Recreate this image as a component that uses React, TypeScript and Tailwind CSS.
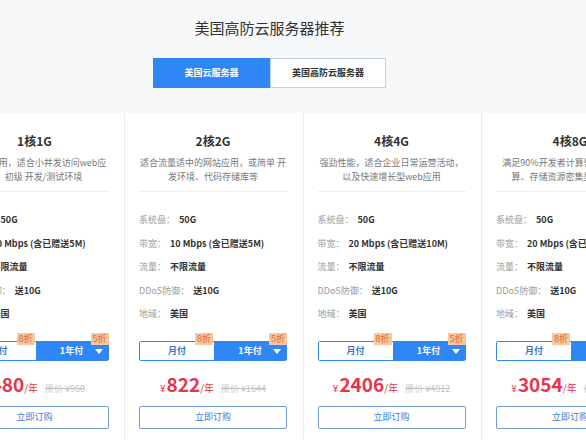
import React from "react";

type Card = {
  title: string;
  desc: string[];
  bw: string;
  price: string;
  orig: string;
};

const cards: Card[] = [
  {
    title: "1核1G",
    desc: ["入门级使用，适合小并发访问web应", "用，初级 开发/测试环境"],
    bw: "10 Mbps (含已赠送5M)",
    price: "480",
    orig: "960",
  },
  {
    title: "2核2G",
    desc: ["适合流量适中的网站应用，或简单 开", "发环境、代码存储库等"],
    bw: "10 Mbps (含已赠送5M)",
    price: "822",
    orig: "1644",
  },
  {
    title: "4核4G",
    desc: ["强劲性能，适合企业日常运营活动，", "以及快速增长型web应用"],
    bw: "20 Mbps (含已赠送10M)",
    price: "2406",
    orig: "4812",
  },
  {
    title: "4核8G",
    desc: ["满足90%开发者计算需求，适合计", "算、存储资源密集型业务应用"],
    bw: "20 Mbps (含已赠送10M)",
    price: "3054",
    orig: "6108",
  },
];

function Spec({ label, value }: { label: string; value: string }) {
  return (
    <div className="flex items-center h-[23.5px] whitespace-nowrap">
      <span className="text-[#9a9a9a]">{label}：</span>
      <span className="ml-[4px] font-bold text-[#333]">{value}</span>
    </div>
  );
}

function PlanCard({ c }: { c: Card }) {
  return (
    <div className="w-[178.5px] shrink-0 bg-white border-l border-[#ececec] pl-[14px] pr-[15.5px] pt-[20px] pb-[30px]">
      <div className="text-center text-[12px] leading-[16px] font-bold text-[#333]">{c.title}</div>
      <div className="mt-[7px] text-[9px] leading-[14px] text-[#777] flex flex-col items-center">
        {c.desc.map((d, i) => (
          <div key={i} className="whitespace-nowrap">{d}</div>
        ))}
      </div>
      <div className="mt-[7px] h-px bg-[#eeeeee]" />
      <div className="mt-[16px] text-[9px]">
        <Spec label="系统盘" value="50G" />
        <Spec label="带宽" value={c.bw} />
        <Spec label="流量" value="不限流量" />
        <Spec label="DDoS防御" value="送10G" />
        <Spec label="地域" value="美国" />
      </div>
      <div className="relative mt-[15px] h-[20px] flex border border-[#2f86f5] rounded-[2px] text-[9px]">
        <div className="w-[74px] flex items-center justify-center bg-white text-[#3a74c8] font-bold">月付</div>
        <div className="flex-1 relative flex items-center justify-center bg-[#2f86f5] text-white font-bold">
          1年付
          <svg className="absolute right-[5px] top-[7px]" width="8" height="5" viewBox="0 0 8 5">
            <path d="M0 0 L8 0 L4 5 Z" fill="#ffffff" />
          </svg>
        </div>
        <span className="absolute left-[55px] -top-[9px] h-[12px] px-[2px] bg-[#f8c79f] text-[#e5652a] text-[9px] leading-[12px]">8折</span>
        <span className="absolute -right-px -top-[9px] h-[12px] px-[2px] bg-[#f8c79f] text-[#e5652a] text-[9px] leading-[12px]">5折</span>
      </div>
      <div className="mt-[11px] flex items-baseline justify-center whitespace-nowrap text-[#e8344c]">
        <span className="text-[10px]">¥</span>
        <span className="ml-[1px] text-[19px] leading-[24px] font-bold">{c.price}</span>
        <span className="text-[10px]">/年</span>
        <span className="ml-[7px] text-[9px] text-[#c4c4c4] line-through">原价 ¥{c.orig}</span>
      </div>
      <div className="mt-[10px] h-[23px] flex items-center justify-center border border-[#6f9cdb] rounded-[2px] text-[9px] text-[#3a7bd6]">
        立即订购
      </div>
    </div>
  );
}

export default function App() {
  return (
    <div
      className="w-[586px] h-[440px] overflow-hidden bg-[#f7f8fa]"
      style={{ fontFamily: '"Noto Sans CJK SC", "Noto Sans", sans-serif' }}
    >
      <div className="w-[539px] flex flex-col items-center pt-[18px]">
        <div className="text-[15px] leading-[20px] text-[#333]">美国高防云服务器推荐</div>
        <div className="mt-[20px] flex h-[30px] text-[9px] font-bold">
          <div className="w-[117px] flex items-center justify-center bg-[#2f86f5] text-white">美国云服务器</div>
          <div className="w-[116px] flex items-center justify-center bg-white border border-[#bfd0e6] text-[#333]">美国高防云服务器</div>
        </div>
      </div>
      <div className="mt-[25px] flex ml-[-54.5px]">
        {cards.map((c, i) => (
          <PlanCard key={i} c={c} />
        ))}
      </div>
    </div>
  );
}
